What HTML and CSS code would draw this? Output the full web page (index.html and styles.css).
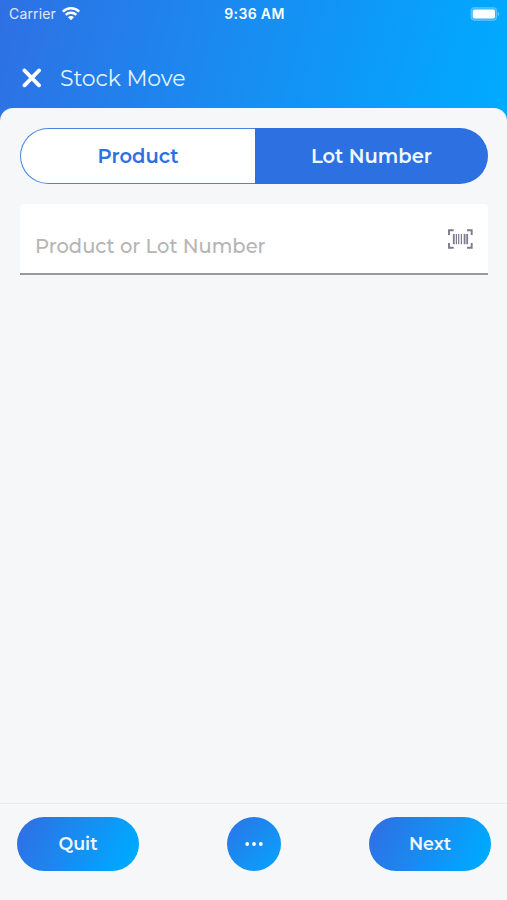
FILE: index.html
```html
<!doctype html>
<html lang="en">
<head>
    <meta charset="utf-8">
    <meta name="viewport" content="width=device-width, initial-scale=1">

    <title>Stock Move</title>

    <link rel="stylesheet" href="styles.css">
</head>
<body>
    <div class="screen">
        <div class="status-bar">
            <div class="status-left">
                <span class="carrier">Carrier</span>
                <svg class="wifi" viewBox="0 0 18 14" width="18" height="14" fill="none" stroke="#fff">
                    <path d="M.8 4.6a11.8 11.8 0 0 1 16.4 0" stroke-width="2.5"/>
                    <path d="M3.7 7.9a7.6 7.6 0 0 1 10.6 0" stroke-width="2.4"/>
                    <path d="M9 13.2 6 10.2a4.2 4.2 0 0 1 6 0z" fill="#fff" stroke="none"/>
                </svg>
            </div>
            <time class="clock">9:36 AM</time>
            <svg class="battery" viewBox="0 0 30 14" width="30" height="14">
                <rect x="1" y="0.7" width="25.6" height="12.6" rx="3.5" fill="#fff" fill-opacity="0.2" stroke="#fff" stroke-opacity="0.25" stroke-width="1.2"/>
                <rect x="2.8" y="2.5" width="22.2" height="9" rx="2" fill="#fff"/>
                <path d="M27.8 4.8c2 .8 2 3.6 0 4.4z" fill="#fff" fill-opacity="0.4"/>
            </svg>
        </div>

        <header class="header">
            <svg class="close" viewBox="0 0 20 20" width="20" height="20" fill="none" stroke="#fff" stroke-width="3.9" stroke-linecap="round">
                <path d="M2.5 2.5 17 17.3M17 2.5 2.5 17.3"/>
            </svg>
            <h1 class="title">Stock Move</h1>
        </header>

        <main class="sheet">
            <div class="tabs">
                <button class="tab" type="button">Product</button>
                <button class="tab tab-active" type="button">Lot Number</button>
            </div>

            <div class="field">
                <span class="placeholder">Product or Lot Number</span>
                <svg class="barcode" viewBox="0 0 26 20" width="26" height="20" fill="none" stroke="#7b7b8e">
                    <path d="M2 6V1.2h4.7M20 1.2h4.7V6M24.7 14v4.8H20M6.7 18.8H2V14" stroke-width="1.9"/>
                    <path d="M6.8 5v10.2M20.2 5v10.2M17.6 5v10.2" stroke-width="1.8"/>
                    <path d="M9.4 5v10.2M11.7 5v10.2M14.4 5v10.2" stroke-width="1.2"/>
                </svg>
            </div>
        </main>

        <footer class="actions">
            <button class="action" type="button">Quit</button>
            <button class="action action-more" type="button" aria-label="More">
                <svg viewBox="0 0 18 4" width="18" height="4" fill="#fff">
                    <circle cx="2.2" cy="2" r="1.9"/>
                    <circle cx="9" cy="2" r="1.9"/>
                    <circle cx="15.8" cy="2" r="1.9"/>
                </svg>
            </button>
            <button class="action" type="button">Next</button>
        </footer>
    </div>
</body>
</html>
```
FILE: styles.css
```css
*,
*::before,
*::after {
    box-sizing: border-box;
    margin: 0;
    padding: 0;
}

body {
    background-color: #f5f7f9;
    font-family: Montserrat, Inter, sans-serif;
}

button {
    border: 0;
    font-family: inherit;
}

svg {
    display: block;
}

.screen {
    background: linear-gradient(105deg, #2f70e4 0%, #00aaff 97%) no-repeat;
    background-size: 100% 130px;
    display: flex;
    flex-direction: column;
    height: 900px;
}

/* Status bar */

.status-bar {
    align-items: center;
    color: #fff;
    display: grid;
    font-family: Inter, sans-serif;
    font-size: 14px;
    grid-template-columns: 1fr auto 1fr;
    height: 27px;
    line-height: 27px;
    padding: 0 7px 0 9px;
}

.status-left {
    align-items: center;
    display: flex;
    gap: 6px;
}

.carrier {
    letter-spacing: 0.15px;
    opacity: 0.85;
}

.clock {
    font-weight: 600;
    letter-spacing: 0.35px;
}

.battery {
    justify-self: end;
}

/* Header */

.header {
    align-items: center;
    display: flex;
    gap: 18px;
    height: 81px;
    padding: 20px 22px 0;
}

.title {
    color: #e4f3ff;
    font-size: 22px;
    font-weight: 400;
    letter-spacing: -0.1px;
    line-height: 30px;
    padding-top: 2px;
}

/* Content */

.sheet {
    background-color: #f5f7f9;
    border-radius: 13px 13px 0 0;
    flex: 1;
    padding: 20px 19px 0 20px;
}

.tabs {
    display: grid;
    grid-template-columns: 235px 1fr;
    height: 56px;
}

.tab {
    background-color: #fff;
    border: 1px solid #4d83df;
    border-radius: 28px 0 0 28px;
    border-right: 0;
    color: #2d70e2;
    font-size: 19.5px;
    font-weight: 600;
}

.tab-active {
    background-color: #2d70e2;
    border: 0;
    border-radius: 0 28px 28px 0;
    color: #f0f8ff;
}

.field {
    background-color: #fff;
    border-bottom: 2px solid #98999b;
    border-radius: 4px 4px 0 0;
    display: flex;
    height: 71px;
    justify-content: space-between;
    margin-top: 20px;
    padding: 25px 15px 0;
}

.placeholder {
    color: #b5b5b5;
    font-size: 19.5px;
    font-weight: 500;
    line-height: 34px;
}

/* Footer buttons */

.actions {
    background-color: #f5f7f9;
    border-top: 1px solid #e9ebed;
    display: flex;
    height: 97px;
    justify-content: space-between;
    padding: 13px 16px 0 17px;
}

.action {
    align-items: center;
    background: linear-gradient(115deg, #2f70e4 5%, #00a8ff 90%);
    border-radius: 27px;
    color: #f0f8ff;
    display: flex;
    font-size: 17.5px;
    font-weight: 600;
    height: 54px;
    justify-content: center;
    padding-bottom: 1px;
    width: 122px;
}

.action-more {
    background: linear-gradient(135deg, #2878e8 10%, #0aa0fb 90%);
    padding-bottom: 0;
    width: 54px;
}
```
